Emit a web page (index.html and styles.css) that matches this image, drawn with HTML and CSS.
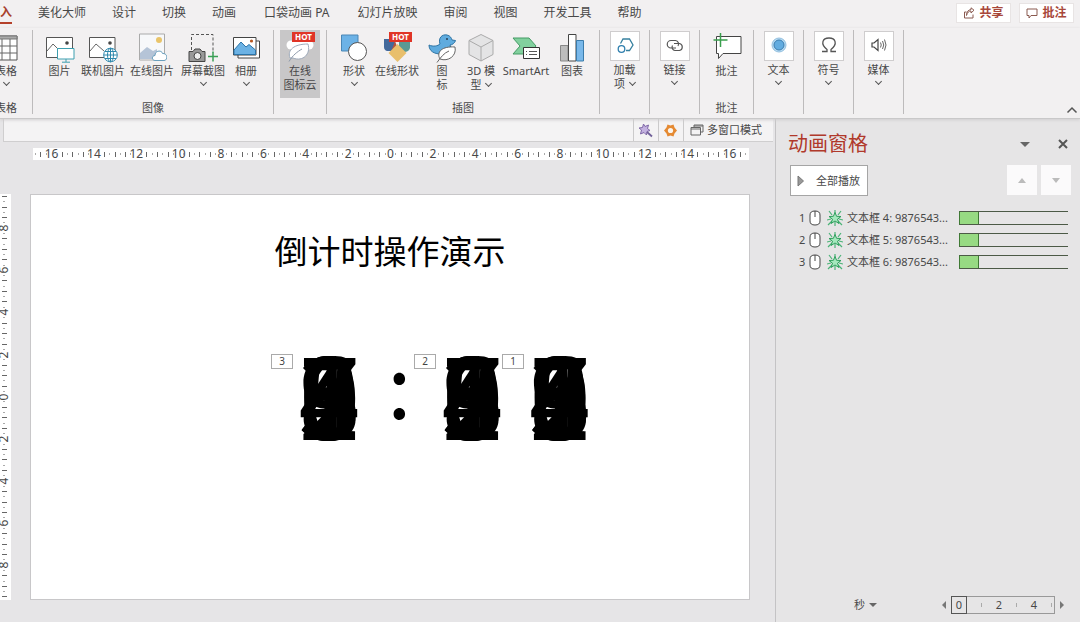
FILE: index.html
```html
<!DOCTYPE html>
<html lang="zh-CN">
<head>
<meta charset="utf-8">
<title>倒计时操作演示</title>
<link rel="stylesheet" href="styles.css">
</head>
<body>
<div class="app">
  <header class="tabs">
    <nav class="tab-list">
      <button class="tab active">插入</button>
      <button class="tab">美化大师</button>
      <button class="tab">设计</button>
      <button class="tab">切换</button>
      <button class="tab">动画</button>
      <button class="tab wide">口袋动画 PA</button>
      <button class="tab">幻灯片放映</button>
      <button class="tab">审阅</button>
      <button class="tab">视图</button>
      <button class="tab">开发工具</button>
      <button class="tab">帮助</button>
    </nav>
    <div class="top-actions">
      <button class="top-btn"><svg width="12" height="12" viewBox="0 0 12 12"><path d="M3.500 5H1.500V11H10V7.500M3.500 8.500C4 5.500 6 4 8 4V6L11 3.200L8 .8V2.600C5 2.800 3.500 5 3.500 8.500Z"/></svg>共享</button>
      <button class="top-btn"><svg width="12" height="12" viewBox="0 0 12 12"><path d="M1 2H11V8.500H5L3 11V8.500H1Z"/></svg>批注</button>
    </div>
  </header>

  <div class="ribbon">
    <section class="group g-table">
      <div class="tools">
        <button class="tool"><svg class="ico" viewBox="0 0 30 30"><path d="M4 3H26V27H4Z" fill="#fff" stroke="#555"/><path d="M4 3H26V6H4Z" fill="#aaa" stroke="#777"/><path d="M4 13H26M4 20H26M11 6V27M19 6V27" stroke="#666"/></svg><span>表格</span><i class="chev"></i></button>
      </div>
      <h2>表格</h2>
    </section>

    <section class="group g-image">
      <div class="tools">
        <button class="tool w43"><svg class="ico" viewBox="0 0 30 30"><path d="M1.500 4.500H27.500V24.500H1.500Z" fill="#fff" stroke="#555"/><path d="M2 18L8 11L15 18L18 15" fill="none" stroke="#666"/><circle cx="22" cy="10" r="1.800" fill="#444"/><path d="M12.500 15.500H29V26H12.500Z" fill="#fff" stroke="#3c9fb0"/><path d="M21 26V29M17 29.200H25" stroke="#3c9fb0"/></svg><span>图片</span></button>
        <button class="tool w44"><svg class="ico" viewBox="0 0 30 30"><path d="M1.500 4.500H27V24.500H1.500Z" fill="#fff" stroke="#555"/><path d="M2 18L8 11L16 18" fill="none" stroke="#666"/><circle cx="22" cy="10" r="1.800" fill="#444"/><g fill="#fff" stroke="#2e88ac"><circle cx="22.500" cy="22" r="6.800"/><ellipse cx="22.500" cy="22" rx="3" ry="6.800"/><path d="M16 22H29M17 18.500H28M17 25.500H28M22.500 15V29" fill="none"/></g></svg><span>联机图片</span></button>
        <button class="tool w54"><svg class="ico" viewBox="0 0 30 30"><path d="M2.500 1H27.500V27H2.500Z" fill="#f7f8fa" stroke="#aaa"/><circle cx="22" cy="7" r="3" fill="#e9c46a"/><path d="M3 26V20L10 14L16 18L20 16V26Z" fill="#b5c4d7"/><path d="M18 27.500C14.500 27.500 14.500 22.500 18 22.500C18 17 25 17 25.500 20.500C31 20 31 27.500 27 27.500Z" fill="#fff" stroke="#6a9fbd"/></svg><span>在线图片</span></button>
        <button class="tool w48"><svg class="ico" viewBox="0 0 30 30"><path d="M3.500 17V1.500H25V20" fill="none" stroke="#555" stroke-dasharray="3 2"/><path d="M1 18.500H5L7 16H12L14 18.500H17V28.500H1Z" fill="#999" stroke="#444"/><circle cx="9.500" cy="23" r="3.500" fill="#eee" stroke="#444"/><path d="M25 18.500V28.500M20 23.500H30" stroke="#3a9f55" stroke-width="1.500"/></svg><span>屏幕截图</span><i class="chev"></i></button>
        <button class="tool w38"><svg class="ico" viewBox="0 0 30 30"><path d="M24 8H28.500V25H7V22" fill="#fff" stroke="#444"/><path d="M2.500 4.500H25V22H2.500Z" fill="#fff" stroke="#444"/><path d="M3 17L10 9L15 14L18 11.500L24.500 17V21.500H3Z" fill="#6cb2e4" stroke="#2c74a8"/><circle cx="20.500" cy="8" r="1.600" fill="#b8561f"/></svg><span>相册</span><i class="chev"></i></button>
      </div>
      <h2>图像</h2>
    </section>

    <section class="group g-cloud">
      <button class="tool selected"><svg class="ico" viewBox="0 0 30 30"><circle cx="6" cy="12" r="4.500" fill="#fff"/><circle cx="24" cy="12" r="4.500" fill="#fff"/><circle cx="15" cy="9" r="7" fill="#fff"/><path d="M5 25C2 17 9 11 23 11C26 21 18 29 8 25Z" fill="#fff" stroke="#9fabbb"/><path d="M4 28.500C8 22 12 19 17 16" fill="none" stroke="#8c99aa"/></svg><b class="hot">HOT</b><span>在线<br>图标云</span></button>
    </section>

    <section class="group g-illus">
      <div class="tools">
        <button class="tool w40"><svg class="ico" viewBox="0 0 30 30"><path d="M2.500 2H19V18H2.500Z" fill="#6cb2e6" stroke="#4a86b5"/><circle cx="18.500" cy="18.500" r="9" fill="#fff" stroke="#555"/></svg><span>形状</span><i class="chev"></i></button>
        <button class="tool w46"><svg class="ico" viewBox="0 0 30 30"><path d="M2 6H13V18H5Q2 17 2 14Z" fill="#44699b"/><path d="M13 8L17 19H9Z" fill="#b5533c"/><path d="M17 6H28V15Q27 19 22 19H17Z" fill="#5b9a94"/><path d="M15.500 11L24.500 20L15.500 29L6.500 20Z" fill="#e8bf6c"/></svg><b class="hot">HOT</b><span>在线形状</span></button>
        <button class="tool w44"><svg class="ico" viewBox="0 0 30 30"><path d="M2 12C6 14 11 13 13 11C11 5 15 1 20 2C23 2.500 24.500 5 25 7L28.500 7.500C28 10 25 12 23 12C26 18 21 21 14 21C7 21 2 18 2 12Z" fill="#5fabde" stroke="#2f74a4"/><circle cx="20" cy="6" r=".9" fill="#234"/><path d="M13 26C9 19 15 13 28 14C30 23 21 29 13 26ZM10 29.500C14 24 17 20 22 18" fill="#fff" stroke="#666"/></svg><span>图<br>标</span></button>
        <button class="tool w34"><svg class="ico" viewBox="0 0 30 30"><path d="M15 1.500L27 7.500V21.500L15 28L3 21.500V7.500Z" fill="#e4e4e5" stroke="#aaa"/><path d="M3 7.500L15 14L27 7.500M15 14V28" fill="none" stroke="#aaa"/></svg><span>3D 模<br>型 <i class="chev inline"></i></span></button>
        <button class="tool w56"><svg class="ico" viewBox="0 0 30 30"><path d="M2 5H18L25 13L18 21H2L9 13Z" fill="#82d09e" stroke="#459b65"/><path d="M12.500 14.500H28.500V25.500H12.500Z" fill="#fff" stroke="#333"/><path d="M18 18.500H26M18 21.500H26M15 18.500H16M15 21.500H16" stroke="#555"/></svg><span>SmartArt</span></button>
        <button class="tool w36"><svg class="ico" viewBox="0 0 30 30"><path d="M3.500 12.500H11V28H3.500Z" fill="#bdbdbd" stroke="#888"/><path d="M11.500 1.500H19V28H11.500Z" fill="#fff" stroke="#444"/><path d="M19.500 7.500H26.500V28H19.500Z" fill="#79b8ea" stroke="#3b7cab"/></svg><span>图表</span></button>
      </div>
      <h2>插图</h2>
    </section>

    <section class="group g-small">
      <button class="tool"><svg class="boxed" viewBox="0 0 28 28"><path d="M9.500 11.500L12 7H18.500L22 13L18.500 18.500H15" fill="none" stroke="#37809f" stroke-width="1.300"/><circle cx="10.500" cy="17" r="3.300" fill="#fff" stroke="#2f7fae" stroke-width="1.300"/></svg><span>加载<br>项 <i class="chev inline"></i></span></button>
    </section>
    <section class="group g-small">
      <button class="tool"><svg class="boxed" viewBox="0 0 28 28"><path d="M15 16H10A3.700 3.700 0 0 1 10 8.500H14.500A3.600 3.600 0 0 1 17 14M13 11.500H18.500A3.600 3.600 0 0 1 18.500 18.500H14A3.400 3.400 0 0 1 11.500 13.500" fill="none" stroke="#555" stroke-width="1.200"/></svg><span>链接</span><i class="chev"></i></button>
    </section>
    <section class="group g-comment">
      <div class="tools">
        <button class="tool w54"><svg class="ico" viewBox="0 0 30 30"><path d="M4.500 3.500H29V20.500H11L6.500 25.500V20.500H4.500Z" fill="#fff" stroke="#444"/><path d="M8.500 0V14M1.500 7H15.500" stroke="#3a9f4d" stroke-width="1.500"/></svg><span>批注</span></button>
      </div>
      <h2>批注</h2>
    </section>
    <section class="group g-small">
      <button class="tool"><svg class="boxed" viewBox="0 0 28 28"><circle cx="14" cy="13" r="7" fill="#b7daf2" stroke="#93c0df"/><circle cx="14" cy="13" r="5" fill="#62ace0" stroke="#3a7db0"/></svg><span>文本</span><i class="chev"></i></button>
    </section>
    <section class="group g-small">
      <button class="tool"><svg class="boxed" viewBox="0 0 28 28"><path d="M7 19.500H12V17.500C5 12 7.500 6 14 6S23 12 16 17.500V19.500H21" fill="none" stroke="#555" stroke-width="1.300"/></svg><span>符号</span><i class="chev"></i></button>
    </section>
    <section class="group g-small">
      <button class="tool"><svg class="boxed" viewBox="0 0 28 28"><path d="M7 11H9L13 7.500V18.500L9 15H7Z" fill="none" stroke="#444" stroke-width="1.200"/><path d="M15.500 10.500Q17 13 15.500 15.500M17.500 9Q20 13 17.500 17M19.500 7.500Q22.500 13 19.500 18.500" fill="none" stroke="#666"/></svg><span>媒体</span><i class="chev"></i></button>
    </section>
    <button class="collapse" aria-label="折叠功能区"><svg width="12" height="8" viewBox="0 0 12 8"><path d="M1.500 6.500L6 2L10.500 6.500" fill="none" stroke="#555" stroke-width="1.500"/></svg></button>
  </div>

  <div class="body">
    <main class="work">
      <div class="quick">
        <button class="q-btn" aria-label="动画魔棒"><svg width="15" height="15" viewBox="0 0 15 15"><path d="M5.500 1L7 3.500L10.500 2L9.500 5.500L12 7.500L9 8.500L8.500 12L6 9.500L2.500 11L3.500 7L1 5L4.500 4.500Z" fill="#c3b1e0" stroke="#8068a8"/><path d="M9 9L14 13.500" stroke="#71609a" stroke-width="1.800"/></svg></button>
        <button class="q-btn" aria-label="设置"><svg width="15" height="15" viewBox="0 0 15 15"><path d="M4.500 1.500L7.500 2.500L10.500 1.500L11.500 4.500L14 7.500L11.500 10.500L10.500 13.500L7.500 12.500L4.500 13.500L3.500 10.500L1 7.500L3.500 4.500Z" fill="#e58a33"/><circle cx="7.500" cy="7.500" r="2.600" fill="#fbf5ee"/></svg></button>
        <button class="q-btn text"><svg width="14" height="12" viewBox="0 0 14 12"><path d="M4 3V1H13V8H10.500M1 3.500H10.500V11H1ZM1 5H10.500M4 2H13" fill="none" stroke="#666"/></svg>多窗口模式</button>
      </div>
      <div class="ruler-h"><div class="marks" data-count="135"></div></div>
      <div class="stage">
        <div class="ruler-v"><div class="marks" data-count="77"></div></div>
        <article class="slide">
          <h1>倒计时操作演示</h1>
          <div class="stack s1"><span>9</span><span>8</span><span>7</span><span>6</span><span>5</span><span>4</span><span>3</span><span>2</span><span>1</span><span>0</span></div>
          <div class="colon">:</div>
          <div class="stack s2"><span>9</span><span>8</span><span>7</span><span>6</span><span>5</span><span>4</span><span>3</span><span>2</span><span>1</span><span>0</span></div>
          <div class="stack s3"><span>9</span><span>8</span><span>7</span><span>6</span><span>5</span><span>4</span><span>3</span><span>2</span><span>1</span><span>0</span></div>
          <span class="tag t1">3</span>
          <span class="tag t2">2</span>
          <span class="tag t3">1</span>
        </article>
      </div>
    </main>

    <aside class="pane">
      <div class="pane-head">
        <h2>动画窗格</h2>
        <button class="plain" aria-label="窗格选项"><i class="tri down"></i></button>
        <button class="plain close" aria-label="关闭"><svg width="10" height="10" viewBox="0 0 10 10"><path d="M1 1L9 9M9 1L1 9" stroke="#555" stroke-width="2"/></svg></button>
      </div>
      <div class="pane-tools">
        <button class="play"><svg width="8" height="12" viewBox="0 0 8 12"><path d="M1 1L6.500 6L1 11Z" fill="#999" stroke="#777"/></svg>全部播放</button>
        <button class="move" aria-label="上移"><i class="tri up pale"></i></button>
        <button class="move" aria-label="下移"><i class="tri down pale"></i></button>
      </div>
      <svg class="defs" width="0" height="0"><defs>
        <symbol id="mouse" viewBox="0 0 12 16"><path d="M1 5Q1 1 6 1T11 5V11Q11 15 6 15T1 11Z" fill="#fff" stroke="#444"/><path d="M6 1V7" stroke="#444"/></symbol>
        <symbol id="burst" viewBox="0 0 16 16"><path d="M2 1L5 5M14 1L11 5M1 15L5 11M15 15L11 11M8 0V3M0 10L4 9M16 10L12 9M8 12V16" stroke="#4bb377" stroke-width="1.200"/><path d="M8 2.500L9.600 6.300L14 6.500L10.500 9.200L12 13.500L8 11L4 13.500L5.500 9.200L2 6.500L6.400 6.300Z" fill="#a5e8bd" stroke="#2c9e5b"/></symbol>
      </defs></svg>
      <ol class="effects">
        <li><span class="num">1</span><svg class="mouse"><use href="#mouse"/></svg><svg class="burst"><use href="#burst"/></svg><span class="name">文本框 4: 9876543...</span><span class="bar"></span></li>
        <li><span class="num">2</span><svg class="mouse"><use href="#mouse"/></svg><svg class="burst"><use href="#burst"/></svg><span class="name">文本框 5: 9876543...</span><span class="bar"></span></li>
        <li><span class="num">3</span><svg class="mouse"><use href="#mouse"/></svg><svg class="burst"><use href="#burst"/></svg><span class="name">文本框 6: 9876543...</span><span class="bar"></span></li>
      </ol>
      <footer class="timeline">
        <button class="unit">秒<i class="tri down small"></i></button>
        <button class="plain" aria-label="向左"><i class="tri left"></i></button>
        <div class="scale"><b>0</b><i></i><span>2</span><i></i><span>4</span><i></i></div>
        <button class="plain" aria-label="向右"><i class="tri right"></i></button>
      </footer>
    </aside>
  </div>
</div>
<script src="rulers.js"></script>
</body>
</html>
```
FILE: styles.css
```css
* { box-sizing: border-box; }
body {
  margin: 0;
  font-family: "Noto Sans", "Noto Sans CJK SC", sans-serif;
  font-size: 11px;
  line-height: 14px;
  color: #484848;
  background: #e6e5e7;
}
button {
  font: inherit;
  color: inherit;
  background: none;
  border: 0;
  padding: 0;
}
h1, h2, ol { margin: 0; padding: 0; font-weight: 400; }
.app { min-height: 100vh; display: flex; flex-direction: column; overflow: hidden; }

/* Tabs */
.tabs { display: flex; justify-content: space-between; height: 28px; background: #f2f0f1; }
.tab-list { display: flex; gap: 26px; margin-left: -12px; align-items: flex-start; }
.tab { font-size: 12px; line-height: 16px; padding: 5px 0 1px; white-space: nowrap; border-bottom: 2px solid transparent; }
.tab.active { font-weight: 700; color: #a8402c; border-color: #b5402a; }
.tab.wide { padding-left: 2px; padding-right: 2px; }
.top-actions { display: flex; gap: 8px; padding: 3px 6px 0 0; align-items: flex-start; }
.top-btn {
  display: flex; align-items: center; justify-content: center; gap: 4px;
  width: 55px; height: 20px;
  background: #fff; border: 1px solid #e8e4e4;
  font-size: 12px; font-weight: 700; color: #a8473a;
}
.top-btn svg { fill: none; stroke: #8a5a50; }

/* Ribbon */
.ribbon { position: relative; display: flex; height: 91px; padding: 2px 0 4px; background: #f2f0f1; border-bottom: 1px solid #c9c8c9; box-shadow: 0 1px 3px #cfcecf; z-index: 1; }
.group { display: flex; flex-direction: column; justify-content: space-between; align-items: center; flex: none; border-right: 1px solid #bdbbbc; }
.group h2 { font-size: 11px; line-height: 12px; }
.tools { display: flex; align-items: flex-start; }
.tool { position: relative; display: flex; flex-direction: column; align-items: center; white-space: nowrap; padding-top: 3px; }
.ico { width: 30px; height: 30px; margin-bottom: 1px; }
.boxed { width: 30px; height: 30px; padding: 0; margin: -1px 0 2px; background: #fff; border: 1px solid #cfcdce; }
.g-small .tool { padding-top: 2px; }
.chev { width: 5px; height: 5px; border: solid #555; border-width: 0 1px 1px 0; transform: rotate(45deg); margin-top: 2px; }
.chev.inline { display: inline-block; margin: 0 0 3px 2px; }
.g-table { width: 33px; }
.g-table .tool { margin-left: -20px; }
.g-table h2 { margin-left: -20px; }
.g-image { width: 241px; }
.g-image .tools, .g-illus .tools { align-self: flex-start; }
.g-image .tools { padding-left: 5px; }
.g-cloud { width: 53px; }
.selected { width: 40px; height: 68px; background: #c8c7c8; }
.g-illus { width: 273px; }
.g-illus .tools { padding-left: 7px; }
.g-small { width: 50px; }
.g-comment { width: 54px; }
.w34 { width: 34px; } .w36 { width: 36px; } .w38 { width: 38px; } .w40 { width: 40px; }
.w43 { width: 43px; } .w44 { width: 44px; } .w46 { width: 46px; } .w48 { width: 48px; }
.w54 { width: 54px; } .w56 { width: 56px; }
.hot {
  position: absolute; top: 2px; left: 50%; margin-left: -8px;
  width: 23px; height: 10px; background: #e03426; color: #fff;
  font-size: 8px; line-height: 10px; text-align: center;
}
.collapse { margin: auto 2px 0 auto; line-height: 8px; }

/* Work area */
.body { display: flex; flex: 1; }
.work { flex: 1; min-width: 0; display: flex; flex-direction: column; }
.quick { display: flex; justify-content: flex-end; height: 23px; margin: 0 2px 0 3px; background: #f4f3f4; border: solid #cfcecf; border-width: 0 0 1px 1px; }
.q-btn { display: flex; align-items: center; justify-content: center; width: 25px; padding-right: 2px; border-left: 1px solid #cbcacb; }
.q-btn.text { width: 90px; gap: 3px; justify-content: flex-start; padding-left: 6px; white-space: nowrap; }
.ruler-h { height: 12px; margin: 6px 26px 0 33px; background: #fff; }
.marks { display: flex; height: 100%; }
.mark { flex: 1 1 0; min-width: 0; min-height: 0; display: flex; align-items: center; justify-content: center; white-space: nowrap; font-size: 12px; line-height: 12px; }
.mark::before { content: ""; flex: none; background: #aaa; width: 1px; height: 2px; }
.mark.tall::before { background: #666; height: 5px; }
.mark.label::before { display: none; }
.stage { flex: 1; display: flex; padding: 34px 25px 23px 0; }
.ruler-v { width: 11px; background: #fff; overflow: hidden; flex: none; }
.ruler-v .marks { flex-direction: column; }
.ruler-v .mark { margin-left: -3px; }
.ruler-v .mark::before { width: 2px; height: 1px; }
.ruler-v .mark.tall::before { width: 5px; }
.ruler-v span span { transform: rotate(-90deg); }
.slide { position: relative; flex: 1; margin-left: 19px; background: #fff; border: 1px solid #c8c7c9; color: #000; min-height: 406px; }
.slide h1 { font-family: "Noto Sans CJK SC", sans-serif; font-size: 33px; line-height: 48px; text-align: center; padding-top: 31px; }
.stack, .colon { position: absolute; font-family: "Noto Sans CJK SC", sans-serif; line-height: 112px; }
.stack { display: grid; top: 140px; width: 66px; margin-left: -33px; font-size: 112px; font-weight: 400; text-align: center; }
.stack span { grid-area: 1 / 1; }
.s1 { left: 41.6%; }
.s2 { left: 61.5%; }
.s3 { left: 73.7%; }
.colon { left: 51.3%; top: 130px; width: 24px; margin-left: -12px; font-size: 87px; text-align: center; }
.tag { position: absolute; top: 159px; width: 22px; height: 15px; border: 1px solid #aaa; background: #fff; color: #444; font-size: 10px; line-height: 13px; text-align: center; }
.t1 { left: 240px; }
.t2 { left: 383px; }
.t3 { left: 471px; }

/* Animation pane */
.pane { width: 305px; flex: none; display: flex; flex-direction: column; border-left: 1px solid #c4c3c5; background: #e6e5e6; }
.pane-head { display: flex; align-items: center; padding: 10px 12px 0; height: 40px; }
.pane-head h2 { flex: 1; font-size: 20px; line-height: 28px; color: #b0392b; }
.pane-head .close { margin-left: 28px; }
.plain { display: flex; align-items: center; }
.tri { width: 0; height: 0; border: solid transparent; border-width: 5px; }
.tri.down { border-top-color: #666; border-bottom-width: 0; }
.tri.up { border-bottom-color: #666; border-top-width: 0; }
.tri.pale { border-top-color: #bbb; border-left-width: 4px; border-right-width: 4px; }
.tri.up.pale { border-top-color: transparent; border-bottom-color: #bbb; }
.tri.small { border-width: 4px 4px 0; }
.tri.left { border-width: 4px 4px 4px 0; border-right-color: #777; }
.tri.right { border-width: 4px 0 4px 4px; border-left-color: #777; }
.pane-tools { display: flex; gap: 4px; padding: 6px 9px 0 14px; }
.play { display: flex; align-items: center; gap: 11px; width: 78px; height: 31px; padding-left: 6px; margin-right: auto; background: #fff; border: 1px solid #a5a5a5; white-space: nowrap; }
.move { display: flex; align-items: center; justify-content: center; width: 30px; height: 30px; background: #fbfafb; }
.defs { position: absolute; }
.effects { list-style: none; padding: 11px 12px 0 23px; }
.effects li { display: flex; align-items: center; height: 22px; }
.num { width: 10px; }
.mouse { width: 12px; height: 16px; margin-right: 6px; }
.burst { width: 16px; height: 16px; margin-right: 4px; }
.name { width: 112px; white-space: nowrap; }
.bar { flex: 1; height: 14px; border: solid #4c5a46; border-width: 1px 0; background: linear-gradient(90deg, #97da83 18px, #3f7a34 18px, #3f7a34 19px, transparent 19px); border-left: 1px solid #3f7a34; }
.timeline { display: flex; align-items: center; gap: 5px; margin-top: auto; padding: 0 16px 9px 78px; }
.unit { display: flex; align-items: center; gap: 4px; margin-right: auto; }
.scale { display: flex; align-items: center; justify-content: space-between; width: 104px; height: 18px; padding-right: 2px; border: 1px solid #999; font-size: 11px; }
.scale b { width: 16px; height: 18px; margin-left: -1px; border: 1px solid #555; font-weight: 400; line-height: 16px; text-align: center; }
.scale i { width: 1px; height: 4px; background: #aaa; }
```
FILE: rulers.js
```js
// Fills each ruler with ticks; the zero label sits in the middle mark.
document.querySelectorAll(".marks").forEach(function (ruler) {
  var count = Number(ruler.dataset.count);
  var middle = (count - 1) / 2;
  for (var k = 0; k < count; k++) {
    var offset = Math.abs(k - middle);
    var mark = document.createElement("span");
    mark.className = "mark";
    if (offset % 8 === 0) {
      mark.classList.add("label");
      var text = document.createElement("span");
      text.textContent = offset / 4;
      mark.appendChild(text);
    } else if (offset % 2 === 0) {
      mark.classList.add("tall");
    }
    ruler.appendChild(mark);
  }
});
```
